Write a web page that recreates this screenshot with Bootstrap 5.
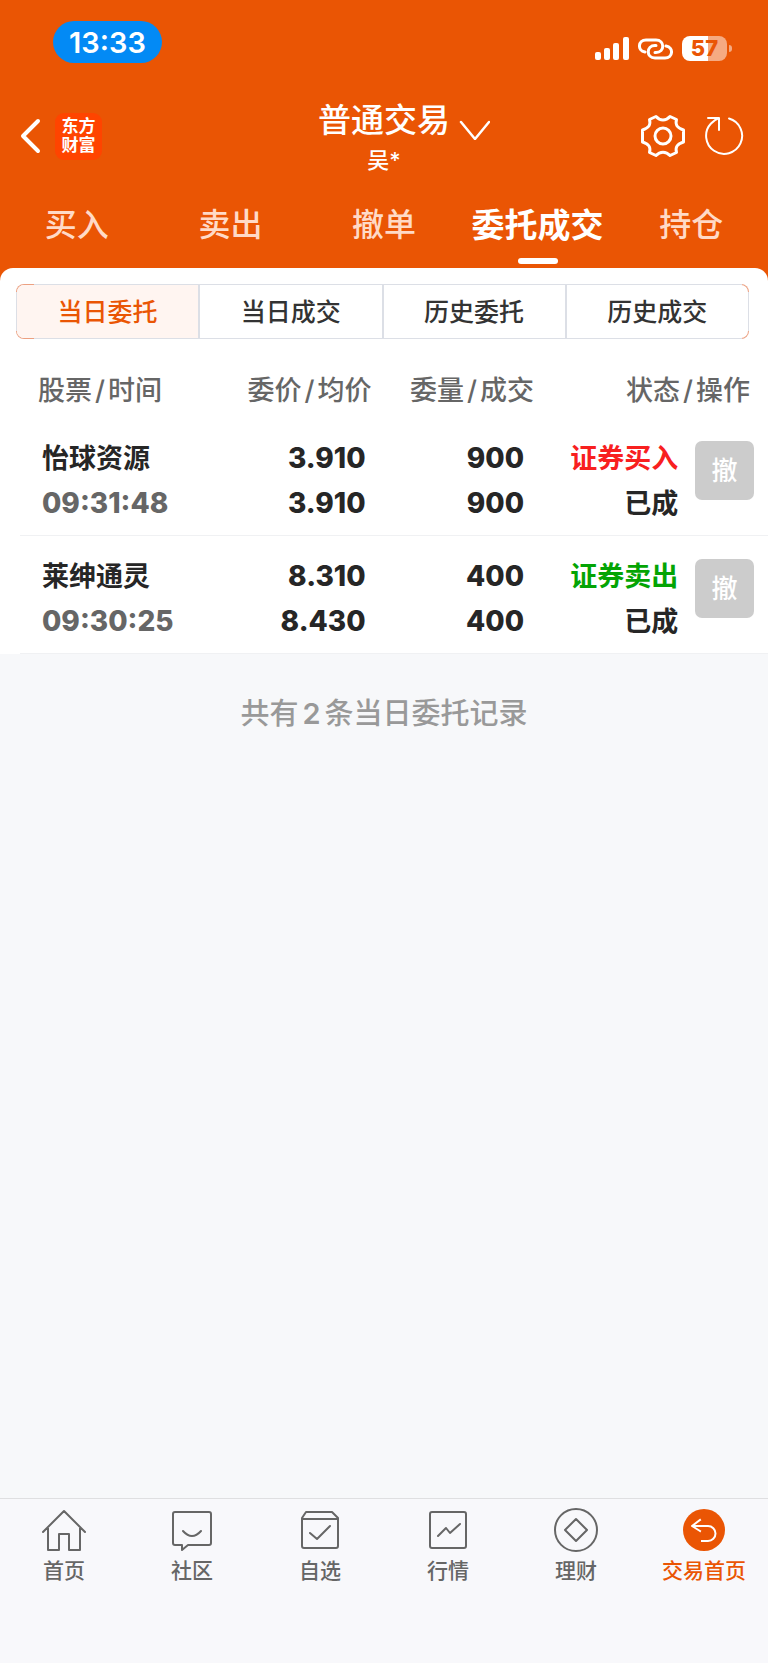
<!DOCTYPE html>
<html lang="zh-CN">
<head>
<meta charset="utf-8">
<meta name="viewport" content="width=device-width, initial-scale=1">
<title>委托成交</title>
<link rel="stylesheet" href="https://cdn.jsdelivr.net/npm/bootstrap@5.3.0/dist/css/bootstrap.min.css">
<style>
  :root { --brand: #ea5504; --ink: #262626; --muted: #666; --rule: #dcdfe6; }
  body { font-family: Inter, "Noto Sans CJK SC", sans-serif; font-weight: 500; background: #f7f8fa; color: var(--ink); }
  a { color: inherit; text-decoration: none; }
  svg { display: block; flex: none; fill: none; stroke: currentColor; stroke-linecap: round; stroke-linejoin: round; }
  .icon-btn { border: 0; padding: 0; background: none; color: inherit; }

  .app-head { background: var(--brand); color: #fff; }
  .status-row { padding: 21px 36px 0 53px; }
  .clock { width: 109px; height: 42px; background: #038af5; font-size: 29px; font-weight: 600; line-height: 43px; }
  .status-icons { gap: 9px; padding-bottom: 2px; }
  .battery { position: relative; width: 45px; height: 25px; margin-right: 5px; border-radius: 8px; background: linear-gradient(to right, #fff 57%, #f5aa82 57%); color: var(--brand); font-size: 22px; font-weight: 800; line-height: 25px; }
  .battery::after { content: ""; position: absolute; left: 47px; top: 9px; width: 3px; height: 7px; border-radius: 0 3px 3px 0; background: #f5aa82; }

  .title-row { display: grid; grid-template-columns: 1fr auto 1fr; padding: 37px 24px 0 20px; }
  .side { padding-bottom: 2px; }
  .logo-tile { width: 47px; height: 47px; margin-left: 13px; border-radius: 9px; background: #ff4400; font-size: 17px; font-weight: 700; line-height: 19px; }
  .page-title { font-size: 33px; font-weight: 500; line-height: 40px; padding-left: 44px; }
  .account { font-size: 22px; line-height: 28px; margin-top: 6px; padding-left: 4px; }
  .tools { gap: 18px; }

  .main-tabs { padding-top: 31px; }
  .main-tabs a { padding-bottom: 23px; font-size: 32px; line-height: 40px; color: #ffdac7; }
  .main-tabs a.active { color: #fff; font-size: 33px; font-weight: 700; position: relative; }
  .main-tabs a.active::after { content: ""; position: absolute; left: 50%; bottom: 4px; width: 40px; height: 6px; margin-left: -20px; border-radius: 3px; background: #fff; }

  .panel-back { background: var(--brand); }
  .panel { background: #fff; border-radius: 13px 13px 0 0; padding-top: 16px; }
  .segments { margin: 0 19px 0 16px; height: 55px; border: 1px solid transparent; border-radius: 8px;
    background:
      linear-gradient(#fff, #fff) padding-box,
      linear-gradient(to right, transparent 18px, var(--rule) 18px, var(--rule) calc(100% - 7px), transparent calc(100% - 7px)) border-box,
      linear-gradient(#eca081 8px, var(--rule) 8px, var(--rule) calc(100% - 8px), #eca081 calc(100% - 8px)) border-box; }
  .segments button { flex: 1 1 0; border: 0; border-left: 2px solid var(--rule); background: none; padding: 2px 0 0; font-size: 25px; font-weight: 500; color: #333; }
  .segments button:first-child { border-left: 0; border-radius: 7px 0 0 7px; background: #fff5f1; color: var(--brand); }

  .orders { margin-left: 20px; }
  .orders table { width: 100%; table-layout: fixed; }
  .orders th { padding: 32px 0 7px 0; font-size: 27px; font-weight: 500; line-height: 40px; color: var(--muted); white-space: nowrap; }
  .orders th i { font-style: normal; margin: 0 3px; }
  .orders td { padding: 18px 6px 9px 0; border-bottom: 1px solid #f0f1f3; vertical-align: top; font-size: 27px; font-weight: 700; line-height: 45px; white-space: nowrap; }
  .orders .num, .orders .time { font-size: 28px; font-weight: 800; }
  .orders th:first-child { padding-left: 18px; }
  .orders td:first-child { padding-left: 22px; }
  .orders th:nth-child(3) { padding-right: 2px; }
  .orders td:nth-child(3) { padding-right: 12px; }
  .orders th:last-child { padding-right: 18px; }
  .orders td:nth-child(4) { padding-right: 0; }
  .orders td:last-child { padding: 23px 14px 0 0; }
  .time { color: var(--muted); }
  .buy { color: #f8201f; }
  .sell { color: #04a404; }
  .cancel { width: 59px; height: 59px; border: 0; border-radius: 7px; background: #ccc; color: #fff; font-size: 26px; font-weight: 500; line-height: 59px; padding: 0; }
  .summary { padding-top: 40px; font-size: 29px; line-height: 40px; color: #999; }
  .summary b { font-weight: 600; margin: 0 4px; }

  .tabbar { background: #f8f8fb; border-top: 1px solid #dfdfe1; padding: 9px 0 77px; color: var(--muted); }
  .tabbar a { font-size: 21px; line-height: 30px; }
  .tabbar svg { margin: 0 auto 4px; stroke-width: 2; }
  .tabbar .active { color: var(--brand); }
</style>
</head>
<body class="d-flex flex-column min-vh-100">

<header class="app-head">
  <div class="status-row d-flex justify-content-between align-items-end">
    <div class="clock rounded-pill text-center">13:33</div>
    <div class="status-icons d-flex align-items-center">
      <svg width="34" height="24" viewBox="0 0 34 24" aria-hidden="true">
        <g fill="#fff" stroke="none"><rect x="0" y="15" width="6" height="8" rx="2"/><rect x="9" y="11" width="6" height="12" rx="2"/><rect x="18" y="6" width="6" height="17" rx="2"/><rect x="28" y="0" width="6" height="23" rx="2"/></g>
      </svg>
      <svg width="35" height="22" viewBox="0 0 35 21" stroke-width="3" aria-hidden="true">
        <path d="M7 13.500C-1 12 0 1.500 8 1.500H18C27 1.500 27 14 18 14H17"/><path d="M28 7.500C36 9 35 19.500 27 19.500H17C8 19.500 8 7 17 7H18"/>
      </svg>
      <div class="battery text-center">57</div>
    </div>
  </div>

  <div class="title-row">
    <div class="side d-flex align-items-center">
      <button class="icon-btn" type="button" aria-label="返回"><svg width="22" height="36" viewBox="0 0 22 36" stroke-width="4"><path d="M18 3L3 18L18 33"/></svg></button>
      <a href="#" class="logo-tile d-flex flex-column justify-content-center text-center me-auto"><span>东方</span><span>财富</span></a>
    </div>
    <div class="text-center">
      <button class="icon-btn page-title d-flex align-items-center mx-auto" type="button">普通交易
        <svg class="ms-2 mt-3" width="32" height="24" viewBox="0 0 32 24" stroke-width="2.500"><path d="M3 6L17 23L31 6"/></svg>
      </button>
      <div class="account">吴*</div>
    </div>
    <div class="side tools d-flex align-items-center justify-content-end">
      <button class="icon-btn" type="button" aria-label="设置"><svg width="46" height="44" viewBox="-23 -22 46 44" stroke-width="3"><path d="M-7-19.500C-3-15 3-15 7-19.500L13.500-16.500C12-11 14-8 20.500-6V6C14 8 12 11 13.500 16.500L7 19.500C3 15-3 15-7 19.500L-13.500 16.500C-12 11-14 8-20.500 6V-6C-14-8-12-11-13.500-16.500Z"/><circle r="8"/></svg></button>
      <button class="icon-btn" type="button" aria-label="刷新"><svg width="40" height="40" viewBox="-20 -20 40 40" stroke-width="2"><path d="M5-17.500A18 18 0 1 1-13-12.500Q-10-16-5-18M-16-18H-5V-6"/></svg></button>
    </div>
  </div>

  <nav class="main-tabs row g-0 text-center">
    <a class="col" href="#">买入</a>
    <a class="col" href="#">卖出</a>
    <a class="col" href="#">撤单</a>
    <a class="col active" href="#" aria-current="page">委托成交</a>
    <a class="col" href="#">持仓</a>
  </nav>
</header>

<main>
  <div class="panel-back">
    <div class="panel">
      <div class="segments d-flex" role="group" aria-label="查询范围">
        <button type="button" aria-pressed="true">当日委托</button>
        <button type="button">当日成交</button>
        <button type="button">历史委托</button>
        <button type="button">历史成交</button>
      </div>
      <div class="orders">
        <table>
          <colgroup><col style="width:27%"><col style="width:20%"><col style="width:22%"><col style="width:19%"><col style="width:12%"></colgroup>
          <thead>
            <tr><th>股票<i>/</i>时间</th><th class="text-end">委价<i>/</i>均价</th><th class="text-end">委量<i>/</i>成交</th><th class="text-end" colspan="2">状态<i>/</i>操作</th></tr>
          </thead>
          <tbody>
            <tr>
              <td>怡球资源<br><span class="time">09:31:48</span></td>
              <td class="num text-end">3.910<br>3.910</td>
              <td class="num text-end">900<br>900</td>
              <td class="text-end"><span class="buy">证券买入</span><br>已成</td>
              <td class="text-end"><button class="cancel d-block ms-auto" type="button">撤</button></td>
            </tr>
            <tr>
              <td>莱绅通灵<br><span class="time">09:30:25</span></td>
              <td class="num text-end">8.310<br>8.430</td>
              <td class="num text-end">400<br>400</td>
              <td class="text-end"><span class="sell">证券卖出</span><br>已成</td>
              <td class="text-end"><button class="cancel d-block ms-auto" type="button">撤</button></td>
            </tr>
          </tbody>
        </table>
      </div>
    </div>
  </div>
  <p class="summary text-center mb-0">共有<b>2</b>条当日委托记录</p>
</main>

<nav class="tabbar row g-0 text-center mt-auto">
  <a class="col" href="#"><svg width="46" height="44" viewBox="0 0 46 44"><path d="M2 24L23 3L44 24M7 20V42H18V26H28V42H39V20"/></svg>首页</a>
  <a class="col" href="#"><svg width="46" height="44" viewBox="0 0 46 44"><path d="M6 4H40Q42 4 42 6V35Q42 37 40 37H19L13 42V37H6Q4 37 4 35V6Q4 4 6 4ZM14 23Q23 33 32 23"/></svg>社区</a>
  <a class="col" href="#"><svg width="46" height="44" viewBox="0 0 46 44"><path d="M9 4H35L41 10V38Q41 40 39 40H7Q5 40 5 38V10ZM5 11H41M13 25L20 31L33 18"/></svg>自选</a>
  <a class="col" href="#"><svg width="46" height="44" viewBox="0 0 46 44"><rect x="5" y="4" width="36" height="36" rx="2"/><path d="M13 28L21 20L25 25L35 16"/></svg>行情</a>
  <a class="col" href="#"><svg width="46" height="44" viewBox="0 0 46 44"><circle cx="23" cy="22" r="21"/><path d="M23 11L34 22L23 33L12 22Z"/></svg>理财</a>
  <a class="col active" href="#" aria-current="page"><svg width="46" height="44" viewBox="0 0 46 44"><circle cx="23" cy="22" r="21" fill="currentColor" stroke="none"/><path stroke="#fff" stroke-linecap="square" d="M19 12L11 18L19 23M12 18H27A7 7 0 0 1 27 33H21"/></svg>交易首页</a>
</nav>

<script src="https://cdn.jsdelivr.net/npm/bootstrap@5.3.0/dist/js/bootstrap.bundle.min.js"></script>
</body>
</html>
